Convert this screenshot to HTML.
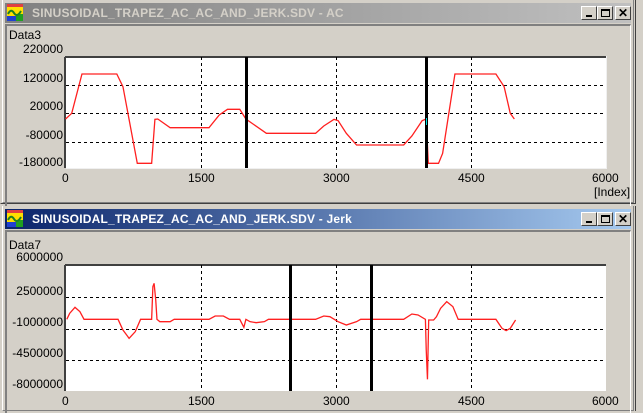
<!DOCTYPE html>
<html><head><meta charset="utf-8"><style>
html,body{margin:0;padding:0;width:643px;height:411px;overflow:hidden;background:#d4d0c8;font-family:"Liberation Sans",sans-serif;}
.win{position:absolute;left:0;width:636px;background:#d4d0c8;box-sizing:border-box;border-left:1px solid #d4d0c8;border-right:1px solid #404040;border-bottom:1px solid #404040;}
.win:before{content:"";position:absolute;left:1px;top:0;bottom:0;right:1px;border-left:1px solid #fff;border-right:1px solid #808080;border-bottom:1px solid #808080;}
.tb{position:absolute;left:4px;right:4px;height:20px;}
.tt{position:absolute;left:27px;top:3px;font-size:12px;font-weight:bold;letter-spacing:0.2px;white-space:nowrap;}
.btn{position:absolute;top:3px;width:16px;height:14px;background:#d4d0c8;box-sizing:border-box;border:1px solid;border-color:#fff #404040 #404040 #fff;}
.client{position:absolute;left:4px;right:4px;border-top:2px solid #808080;border-left:2px solid #808080;border-right:1px solid #fff;}
.lab{position:absolute;font-size:12px;color:#000;white-space:nowrap;}
.r{text-align:right;width:60px;}
</style></head><body>
<!-- top window -->
<div class="win" style="top:0;height:204px;">
 <div class="tb" style="top:3px;background:linear-gradient(90deg,#808080,#c0c0c0);">
  <svg style="position:absolute;left:2px;top:1px" width="16" height="17" viewBox="0 0 16 17"><rect width="16" height="17" fill="#ffe000"/><rect y="12" width="16" height="5" fill="#2040d0"/><rect x="9" y="10" width="7" height="7" fill="#20a020"/><path d="M1 10 Q4 4 7 9 T14 7" stroke="#208020" stroke-width="2" fill="none"/><rect width="16" height="3" fill="#e04040"/></svg>
  <div class="tt" style="color:#d4d0c8">SINUSOIDAL_TRAPEZ_AC_AC_AND_JERK.SDV - AC</div>
  <div class="btn" style="left:576px"><div style="position:absolute;left:4px;top:8px;width:6px;height:2px;background:#000"></div></div>
  <div class="btn" style="left:592px"><div style="position:absolute;left:3px;top:2px;width:9px;height:8px;box-sizing:border-box;border:1px solid #000;border-top-width:2px"></div></div>
  <div class="btn" style="left:610px;font-size:12px;font-weight:bold;text-align:center;line-height:12px">✕</div>
 </div>
 <div class="client" style="top:24px;height:180px;"></div>
</div>
<!-- bottom window -->
<div class="win" style="top:206px;height:205px;border-bottom:none">
 <div class="tb" style="top:3px;background:linear-gradient(90deg,#0a246a,#a6caf0);">
  <svg style="position:absolute;left:2px;top:1px" width="16" height="17" viewBox="0 0 16 17"><rect width="16" height="17" fill="#ffe000"/><rect y="12" width="16" height="5" fill="#2040d0"/><rect x="9" y="10" width="7" height="7" fill="#20a020"/><path d="M1 10 Q4 4 7 9 T14 7" stroke="#208020" stroke-width="2" fill="none"/><rect width="16" height="3" fill="#e04040"/></svg>
  <div class="tt" style="color:#fff">SINUSOIDAL_TRAPEZ_AC_AC_AND_JERK.SDV - Jerk</div>
  <div class="btn" style="left:576px"><div style="position:absolute;left:4px;top:8px;width:6px;height:2px;background:#000"></div></div>
  <div class="btn" style="left:592px"><div style="position:absolute;left:3px;top:2px;width:9px;height:8px;box-sizing:border-box;border:1px solid #000;border-top-width:2px"></div></div>
  <div class="btn" style="left:610px;font-size:12px;font-weight:bold;text-align:center;line-height:12px">✕</div>
 </div>
 <div class="client" style="top:24px;height:181px;border-bottom:none"></div>
</div>

<svg style="position:absolute;left:0;top:0" width="643" height="411">
 <!-- top plot -->
 <rect x="65" y="56" width="541" height="112" fill="#fff"/>
 <path d="M65 57H606 M65 57V168" stroke="#404040" stroke-width="2" fill="none"/>
 <path d="M66 168.5H606.5V56" stroke="#f0f0f0" stroke-width="1" fill="none"/>
 <g stroke="#000" stroke-width="1" stroke-dasharray="3,3">
  <path d="M66 85.5H606 M66 113.5H606 M66 142.5H606 M201.5 57V168 M336.5 57V168 M471.5 57V168"/>
 </g>
 <g transform="translate(0,50) scale(0.40984,0.33333)" fill="none">
  <polyline vector-effect="non-scaling-stroke" stroke="#ff2020" stroke-width="1.3" points="160,207 175,190 200,72 285,72 300,110 335,340 370,340 378,208 385,207 415,233 510,233 535,195 555,178 585,178 600,207 650,250 770,250 790,228 815,208 825,212 845,250 870,285 985,285 1005,258 1030,212 1040,207 1045,340 1070,340 1080,310 1110,72 1210,72 1230,110 1245,190 1255,207"/>
 </g>
 <rect x="245" y="57" width="3" height="111" fill="#000"/>
 <rect x="425" y="57" width="3" height="111" fill="#000"/>
 <rect x="426" y="118" width="1" height="7" fill="#00e0e0"/>

 <!-- bottom plot -->
 <rect x="65" y="264" width="541" height="127" fill="#fff"/>
 <path d="M65 265H606 M65 265V391" stroke="#404040" stroke-width="2" fill="none"/>
 <g stroke="#000" stroke-width="1" stroke-dasharray="3,3">
  <path d="M66 297.5H606 M66 329.5H606 M66 360.5H606 M201.5 265V391 M336.5 265V391 M471.5 265V391"/>
 </g>
 <g transform="translate(0,280) scale(0.40984,0.33333)" fill="none">
  <polyline vector-effect="non-scaling-stroke" stroke="#ff2020" stroke-width="1.3" points="163,118 170,100 183,82 195,95 205,118 288,118 300,150 315,175 330,155 343,118 370,118 373,20 376,10 380,60 383,118 390,125 415,125 425,118 510,118 525,108 545,108 560,118 585,118 590,130 595,142 600,118 610,125 625,128 645,125 655,118 770,118 790,108 805,110 825,125 845,135 870,125 880,118 985,118 1005,102 1020,105 1038,118 1040,210 1043,298 1046,120 1058,120 1065,110 1075,85 1090,65 1105,80 1118,118 1210,118 1225,145 1235,152 1245,145 1258,120"/>
 </g>
 <rect x="289" y="265" width="3" height="126" fill="#000"/>
 <rect x="370" y="265" width="3" height="126" fill="#000"/>
</svg>

<!-- top labels -->
<div class="lab" style="left:9px;top:28px">Data3</div>
<div class="lab r" style="left:3px;top:42px">220000</div>
<div class="lab r" style="left:3px;top:71px">120000</div>
<div class="lab r" style="left:3px;top:99px">20000</div>
<div class="lab r" style="left:3px;top:128px">-80000</div>
<div class="lab r" style="left:3px;top:155px">-180000</div>
<div class="lab" style="left:62px;top:171px">0</div>
<div class="lab" style="left:188px;top:171px">1500</div>
<div class="lab" style="left:323px;top:171px">3000</div>
<div class="lab" style="left:458px;top:171px">4500</div>
<div class="lab" style="left:592px;top:171px">6000</div>
<div class="lab" style="left:594px;top:185px">[Index]</div>

<!-- bottom labels -->
<div class="lab" style="left:9px;top:238px">Data7</div>
<div class="lab r" style="left:3px;top:250px">6000000</div>
<div class="lab r" style="left:3px;top:284px">2500000</div>
<div class="lab r" style="left:3px;top:315px">-1000000</div>
<div class="lab r" style="left:3px;top:346px">-4500000</div>
<div class="lab r" style="left:3px;top:377px">-8000000</div>
<div class="lab" style="left:62px;top:394px">0</div>
<div class="lab" style="left:188px;top:394px">1500</div>
<div class="lab" style="left:323px;top:394px">3000</div>
<div class="lab" style="left:458px;top:394px">4500</div>
<div class="lab" style="left:592px;top:394px">6000</div>
</body></html>
